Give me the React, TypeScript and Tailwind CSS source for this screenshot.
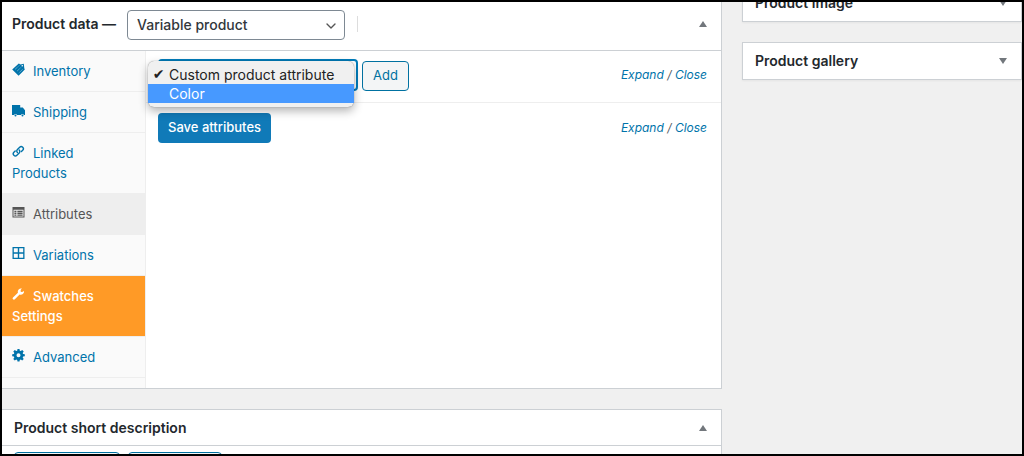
import type { ReactNode } from "react";
import { ChevronDown } from "lucide-react";

type Tab = {
  label: string;
  icon: ReactNode;
  className?: string;
};

function Icon({ children }: { children: ReactNode }) {
  return (
    <svg
      viewBox="0 0 13 13"
      aria-hidden="true"
      fill="currentColor"
      className="mr-2 inline-block size-[13px] align-baseline"
    >
      {children}
    </svg>
  );
}

const tabs: Tab[] = [
  {
    label: "Inventory",
    icon: (
      <Icon>
        <path
          fillRule="evenodd"
          d="M.2 6.400 6.800.4 8.600 1.400 11.800.8 12.300 5.200 12.800 6.600 6.600 12.800zM10.300 2a.8.8 0 1 0 0 1.600.8.8 0 0 0 0-1.600z"
        />
        <path
          d="M3 6.400 7.400 2.400M5 8.200l4.200-4M6.800 10l4.200-4"
          stroke="#fafafa"
          strokeWidth=".5"
          strokeDasharray="1 .7"
        />
      </Icon>
    ),
  },
  {
    label: "Shipping",
    icon: (
      <Icon>
        <path d="M0 1h8.200v2.500h2.600L13 6.200V11h-1.100a1.500 1.500 0 0 0-2.900 0H5a1.500 1.500 0 0 0-2.900 0H0z" />
        <circle cx="3.500" cy="11.400" r="1" />
        <circle cx="10.500" cy="11.400" r="1" />
      </Icon>
    ),
  },
  {
    label: "Linked Products",
    icon: (
      <Icon>
        <g fill="none" stroke="currentColor" strokeWidth="1.4" strokeLinecap="round">
          <path d="M5.400 7.600a2.100 2.100 0 0 1 0-3l2.300-2.300a2.100 2.100 0 0 1 3 3L9.400 6.600" />
          <path d="M7.200 5a2.100 2.100 0 0 1 0 3L4.900 10.300a2.100 2.100 0 0 1-3-3L3.200 6" />
        </g>
      </Icon>
    ),
  },
  {
    label: "Attributes",
    className: "bg-[#eeeeee] text-[#555555]",
    icon: (
      <Icon>
        <path
          fillRule="evenodd"
          d="M.5 1h12v10.500H.5zM1.500 3.800v6.700h10V3.800z"
        />
        <path d="M2.400 4.700h2v1.300h-2zM5.400 4.700h5.200v1.300H5.400zM2.400 6.600h2v1.300h-2zM5.400 6.600h5.200v1.300H5.400zM2.400 8.500h2v1.300h-2zM5.400 8.500h5.200v1.300H5.400z" />
      </Icon>
    ),
  },
  {
    label: "Variations",
    icon: (
      <Icon>
        <path
          fillRule="evenodd"
          d="M.5 0h12v12H.5zM1.800 1.300v4h4v-4zM7.200 1.300v4h4v-4zM1.800 6.700v4h4v-4zM7.200 6.700v4h4v-4z"
        />
      </Icon>
    ),
  },
  {
    label: "Swatches Settings",
    className: "bg-[#ff9a26] text-white font-medium",
    icon: (
      <Icon>
        <path d="M11 3.800 9.300 4.100 8.500 3.300 8.900 1.600 10 .6A3.300 3.300 0 0 0 5.900 4.800L1 9.400a1.300 1.300 0 0 0 1.900 1.900L7.600 6.500A3.300 3.300 0 0 0 12 2.700z" />
      </Icon>
    ),
  },
  {
    label: "Advanced",
    icon: (
      <Icon>
        <path
          fillRule="evenodd"
          d="M5.500 0h2l.3 1.700 1 .4 1.400-1 1.500 1.500-1 1.400.4 1 1.700.3v2l-1.700.3-.4 1 1 1.400-1.500 1.500-1.400-1-1 .4-.3 1.700h-2l-.3-1.700-1-.4-1.400 1L1.300 10l1-1.400-.4-1L.2 7.300v-2l1.700-.3.4-1-1-1.400 1.500-1.500 1.400 1 1-.4zM6.500 4.300a2 2 0 1 0 0 4 2 2 0 0 0 0-4z"
        />
      </Icon>
    ),
  },
];

function Toggle({ label, down }: { label: string; down?: boolean }) {
  return (
    <button type="button" aria-label={label} className="flex w-9 items-center justify-center text-[#72777c]">
      <svg viewBox="0 0 8 6" fill="currentColor" className="h-1.5 w-2">
        <path d={down ? "M0 0h8L4 6z" : "M0 6h8L4 0z"} />
      </svg>
    </button>
  );
}

function ExpandClose() {
  return (
    <span className="text-xs italic text-[#555d66]">
      <a href="#expand" className="text-[#0073aa]">
        Expand
      </a>{" "}
      /{" "}
      <a href="#close" className="text-[#0073aa]">
        Close
      </a>
    </span>
  );
}

function SideBox({ title }: { title: string }) {
  return (
    <section className="flex h-[38px] justify-between border border-[#ccd0d4] bg-white shadow-xs">
      <h2 className="pl-3 text-sm leading-9 font-semibold">{title}</h2>
      <Toggle label={`Toggle ${title}`} down />
    </section>
  );
}

function ProductData() {
  return (
    <section className="border-r border-b border-[#ccd0d4] bg-white">
      <div className="flex h-[49px] items-center border-b border-[#ccd0d4] pb-1 pl-2.5">
        <label htmlFor="product-type" className="text-sm font-semibold">
          Product data —
        </label>
        <div className="relative ml-[11px] pt-0.5">
          <select
            id="product-type"
            className="block h-[30px] w-[218px] appearance-none rounded-sm border border-[#7e8993] bg-white pl-[9px] text-sm font-medium text-[#32373c]"
          >
            <option>Variable product</option>
          </select>
          <ChevronDown className="pointer-events-none absolute top-2.5 right-1.5 size-4 text-[#555555]" />
        </div>
        <span className="ml-3 h-4 border-l border-[#dddddd]" />
        <div className="ml-auto flex">
          <Toggle label="Toggle Product data" />
        </div>
      </div>

      <div className="flex">
        <ul className="w-36 shrink-0 border-r border-[#eeeeee] bg-[#fafafa] pb-2.5">
          {tabs.map((tab) => (
            <li key={tab.label} className="border-b border-[#eeeeee]">
              <a
                href="#tab"
                className={`block py-2.5 pr-6 pl-2.5 text-[13px] leading-5 ${tab.className ?? "text-[#0073aa]"}`}
              >
                {tab.icon}
                {tab.label}
              </a>
            </li>
          ))}
        </ul>

        <div className="min-w-0 flex-1">
          <div className="flex items-center justify-between border-b border-[#eeeeee] pt-2 pr-3.5 pb-[11px] pl-3">
            <div className="relative flex items-end gap-1">
              <select
                aria-label="Attribute"
                className="h-8 w-[200px] appearance-none rounded-sm border-2 border-[#007cba] bg-white pl-2 text-sm"
              >
                <option>Custom product attribute</option>
                <option>Color</option>
              </select>
              <button
                type="button"
                className="h-[30px] rounded-sm border border-[#0071a1] bg-[#f3f5f6] px-2.5 text-[13px] text-[#0071a1]"
              >
                Add
              </button>
              <ul
                role="listbox"
                aria-label="Attribute options"
                className="absolute top-0.5 -left-2.5 w-[206px] rounded-md bg-[#f0f0f0] pt-1 pb-1 text-sm leading-[19px] text-[#222222] shadow-[0_0_1px_rgba(0,0,0,0.5),0_4px_10px_rgba(0,0,0,0.3)]"
              >
                <li role="option" aria-selected="true" className="flex">
                  <span className="w-[21px] text-center font-['DejaVu_Sans']">✔</span>
                  Custom product attribute
                </li>
                <li role="option" aria-selected="false" className="bg-[#4799ff] pl-[21px] text-white">
                  Color
                </li>
              </ul>
            </div>
            <ExpandClose />
          </div>
          <div className="flex items-center justify-between py-2.5 pr-3.5 pl-3">
            <button
              type="button"
              className="h-[30px] rounded-sm bg-[#107ab8] px-2.5 text-[13px] font-medium text-white"
            >
              Save attributes
            </button>
            <ExpandClose />
          </div>
        </div>
      </div>
    </section>
  );
}

function ShortDescription() {
  return (
    <section className="border-t border-r border-[#ccd0d4] bg-white">
      <div className="flex justify-between border-b border-[#ccd0d4]">
        <h2 className="pl-3 text-sm leading-[35px] font-semibold">Product short description</h2>
        <Toggle label="Toggle Product short description" />
      </div>
      <div className="flex gap-2 px-3 pt-1.5">
        <button
          type="button"
          aria-label="Add media"
          className="h-[30px] w-[106px] rounded-sm border border-[#0071a1] bg-[#f3f5f6]"
        />
        <button
          type="button"
          aria-label="Add form"
          className="h-[30px] w-[94px] rounded-sm border border-[#0071a1] bg-[#f3f5f6]"
        />
      </div>
    </section>
  );
}

export default function App() {
  return (
    <div className="flex h-screen gap-5 overflow-hidden border-2 border-black bg-[#f0f0f0] font-['Inter',sans-serif] text-[#23282d]">
      <main className="flex min-w-0 flex-1 flex-col gap-5">
        <ProductData />
        <ShortDescription />
      </main>
      <aside className="-mt-4.5 flex w-[280px] shrink-0 flex-col gap-5">
        <SideBox title="Product image" />
        <SideBox title="Product gallery" />
      </aside>
    </div>
  );
}
